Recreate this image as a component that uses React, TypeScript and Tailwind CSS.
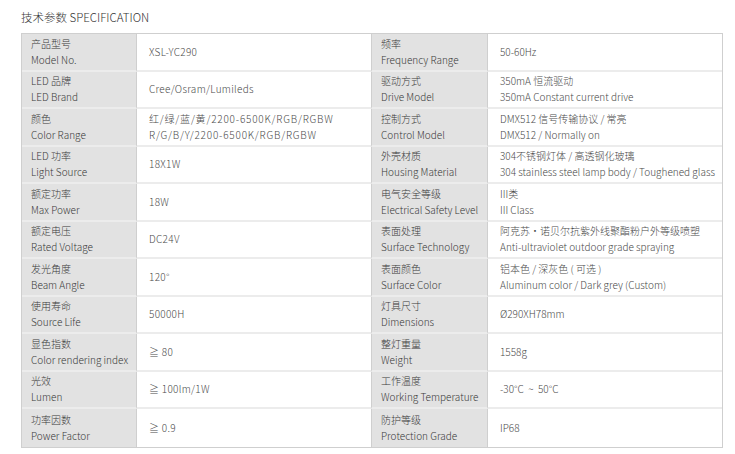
import React from 'react';

type Spec = { zh: string; en: string; value: string[]; spaced?: boolean };

const LEFT: Spec[] = [
  { zh: '产品型号', en: 'Model No.', value: ['XSL-YC290'] },
  { zh: 'LED 品牌', en: 'LED Brand', value: ['Cree/Osram/Lumileds'] },
  { zh: '颜色', en: 'Color Range', value: ['红/绿/蓝/黄/2200-6500K/RGB/RGBW', 'R/G/B/Y/2200-6500K/RGB/RGBW'], spaced: true },
  { zh: 'LED 功率', en: 'Light Source', value: ['18X1W'] },
  { zh: '额定功率', en: 'Max Power', value: ['18W'] },
  { zh: '额定电压', en: 'Rated Voltage', value: ['DC24V'] },
  { zh: '发光角度', en: 'Beam Angle', value: ['120°'] },
  { zh: '使用寿命', en: 'Source Life', value: ['50000H'] },
  { zh: '显色指数', en: 'Color rendering index', value: ['≧ 80'] },
  { zh: '光效', en: 'Lumen', value: ['≧ 100lm/1W'] },
  { zh: '功率因数', en: 'Power Factor', value: ['≧ 0.9'] },
];

const RIGHT: Spec[] = [
  { zh: '频率', en: 'Frequency Range', value: ['50-60Hz'] },
  { zh: '驱动方式', en: 'Drive Model', value: ['350mA 恒流驱动', '350mA Constant current drive'] },
  { zh: '控制方式', en: 'Control Model', value: ['DMX512 信号传输协议 / 常亮', 'DMX512 / Normally on'] },
  { zh: '外壳材质', en: 'Housing Material', value: ['304不锈钢灯体 / 高透钢化玻璃', '304 stainless steel lamp body / Toughened glass'] },
  { zh: '电气安全等级', en: 'Electrical Safety Level', value: ['III类', 'III Class'] },
  { zh: '表面处理', en: 'Surface Technology', value: ['阿克苏·诺贝尔抗紫外线聚酯粉户外等级喷塑', 'Anti-ultraviolet outdoor grade spraying'] },
  { zh: '表面颜色', en: 'Surface Color', value: ['铝本色 / 深灰色 ( 可选 )', 'Aluminum color / Dark grey (Custom)'] },
  { zh: '灯具尺寸', en: 'Dimensions', value: ['Ø290XH78mm'] },
  { zh: '整灯重量', en: 'Weight', value: ['1558g'] },
  { zh: '工作温度', en: 'Working Temperature', value: ['-30°C  ~  50°C'] },
  { zh: '防护等级', en: 'Protection Grade', value: ['IP68'] },
];

const Label: React.FC<{ spec: Spec; last: boolean; first?: boolean }> = ({ spec, last, first }) => (
  <div
    className={`bg-[#e2e2e2] flex flex-col justify-center pl-[9px] leading-[16px] text-[#3a3a3a] border-r border-[#cfcfcf] ${first ? '' : 'border-l border-l-[#cfcfcf]'} ${last ? '' : 'border-b-2 border-b-[#ececec]'}`}
  >
    <span>{spec.zh}</span>
    <span className="whitespace-nowrap">{spec.en}</span>
  </div>
);

const Value: React.FC<{ spec: Spec; last: boolean; wide?: boolean }> = ({ spec, last, wide }) => {
  const tracking = spec.spaced ? 'tracking-[0.8px]' : wide ? 'tracking-[0.3px]' : '';
  return (
    <div
      className={`bg-white flex flex-col justify-center pl-[12px] leading-[16px] text-[#4a4a4a] ${last ? '' : 'border-b-2 border-b-[#ececec]'} ${tracking}`}
    >
      {spec.value.map((v, i) => (
        <span key={i} className="whitespace-pre">{v}</span>
      ))}
    </div>
  );
};

export default function App() {
  return (
    <div
      className="w-[735px] h-[454px] bg-white text-[10px] font-light"
      style={{ fontFamily: '"Noto Sans CJK SC", sans-serif' }}
    >
      <div className="pl-[21px] pt-[8px] h-[33px] text-[11.5px] text-[#333] leading-[18px]">
        技术参数 SPECIFICATION
      </div>
      <div className="ml-[21px] w-[702px] border border-[#cfcfcf] grid grid-cols-[115px_234px_117px_1fr] auto-rows-[37.5px]">
        {LEFT.map((l, i) => {
          const r = RIGHT[i];
          const last = i === LEFT.length - 1;
          return (
            <React.Fragment key={i}>
              <Label spec={l} last={last} first />
              <Value spec={l} last={last} wide />
              <Label spec={r} last={last} />
              <Value spec={r} last={last} />
            </React.Fragment>
          );
        })}
      </div>
    </div>
  );
}
